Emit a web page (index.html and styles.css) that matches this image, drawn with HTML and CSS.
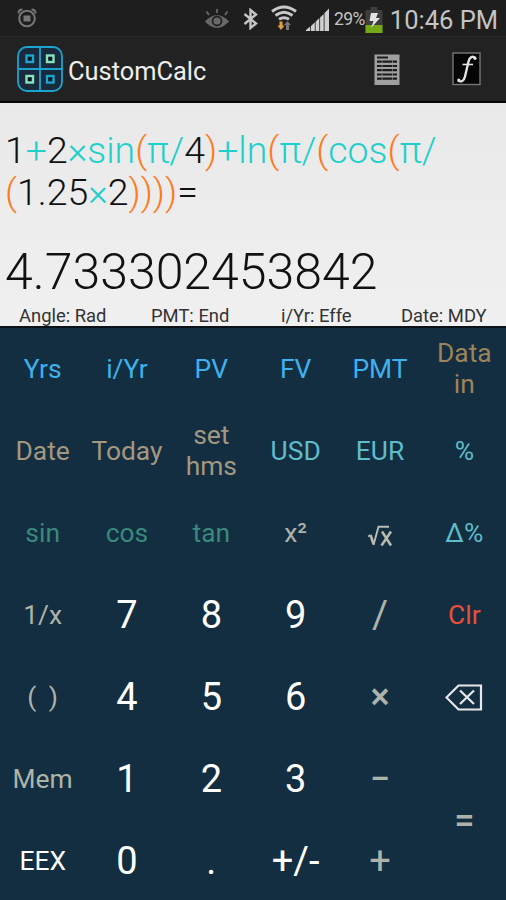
FILE: index.html
```html
<!DOCTYPE html>
<html lang="en">
<head>
    <meta charset="UTF-8">
    <meta name="viewport" content="width=device-width, initial-scale=1.0">
    <title>CustomCalc</title>
    <link rel="stylesheet" href="styles.css">
</head>
<body>
    <div class="statusbar">
        <svg class="alarm" width="20" height="20" viewBox="0 0 20 20" fill="none" stroke="#777" stroke-width="2">
            <circle cx="10" cy="10.5" r="7.8"/>
            <rect x="6.5" y="7.5" width="7" height="6" fill="#777" stroke="none"/>
            <path d="M1.5 5.5Q1.5 1.5 5.5 1.5M14.5 1.5Q18.5 1.5 18.5 5.5"/>
        </svg>
        <svg class="eye" width="26" height="22" viewBox="0 0 26 22">
            <path d="M1 13.5Q13 .5 25 13.5Q13 26.5 1 13.5Z" fill="#696969"/>
            <circle cx="13" cy="13" r="4.5" fill="none" stroke="#222" stroke-width="1.8"/>
            <path d="M2.5 3.5L5 7M13 1V5M23.5 3.5L21 7" stroke="#696969" stroke-width="1.8"/>
        </svg>
        <svg class="bluetooth" width="15" height="22" viewBox="0 0 15 22" fill="none" stroke="#c4c4c4" stroke-width="2.4">
            <path d="M1.5 6L13 15.5L7.5 20V2L13 6.5L1.5 16"/>
        </svg>
        <svg class="wifi" width="26" height="26" viewBox="0 0 26 26">
            <g fill="none" stroke="#c8c8c8" stroke-width="3">
                <path d="M1 6.5Q13 -2.5 25 6.5"/>
                <path d="M4.5 10.5Q13 4 21.5 10.5"/>
                <path d="M8 14.3Q13 11 18 14.3"/>
            </g>
            <path d="M8.5 16.5H11.5V20.5H13.5L10 25L6.5 20.5H8.5Z" fill="#e0a040"/>
            <path d="M15 25V20H13L16.5 16L20 20H18V25Z" fill="#777"/>
        </svg>
        <svg class="signal" width="24" height="24" viewBox="0 0 24 24" fill="#cfcfcf">
            <path d="M0 23V22L4.2 18.5V23ZM5 23V18L8.8 14.2V23ZM9.6 23V13.8L13.3 10V23ZM14.1 23V9.5L17.7 6V23ZM18.5 23V5L23 .5V23Z"/>
        </svg>
        <span class="percent">29%</span>
        <svg class="battery" width="18" height="26" viewBox="0 0 18 26">
            <path d="M5.5 0H12.5V3H17.5V26H.5V3H5.5Z" fill="#3d3d3d"/>
            <rect x=".5" y="18" width="17" height="8" fill="#75a817"/>
            <path d="M6 6H13L11 11H15L6 21L8.5 14H4.5Z" fill="#e2e2e2"/>
        </svg>
        <span class="clock">10:46 PM</span>
    </div>

    <header class="titlebar">
        <svg class="logo" width="46" height="46" viewBox="0 0 46 46" fill="none">
            <rect x="1" y="1" width="44" height="44" rx="9" fill="#182a3c" stroke="#1ba4cf" stroke-width="1.8"/>
            <path d="M23 1V45M1 23H45" stroke="#1ba4cf" stroke-width="1.8"/>
            <g stroke-width="2.4" fill="#0b1420">
                <rect x="9.5" y="9.5" width="6.5" height="6.5" stroke="#1ba4cf"/>
                <rect x="30" y="9.5" width="6.5" height="6.5" stroke="#8be0bd"/>
                <rect x="9.5" y="30" width="6.5" height="6.5" stroke="#8be0bd"/>
                <rect x="30" y="30" width="6.5" height="6.5" stroke="#1ba4cf"/>
            </g>
        </svg>
        <h1 class="title">CustomCalc</h1>
        <svg class="tape" width="26" height="31" viewBox="0 0 26 31">
            <rect x=".5" y=".5" width="25" height="30.5" fill="#a0a0a0"/>
            <path d="M3 3.5H14M3 7.7H23M3 12H23M3 16.2H23M3 20.5H23M3 24.7H23" stroke="#1c1c1c" stroke-width="2.2"/>
            <path d="M8 6V26M18.5 6V26" stroke="#a0a0a0" stroke-width=".6"/>
        </svg>
        <svg class="func" width="29" height="34" viewBox="0 0 29 34" fill="none">
            <rect x="1" y="1" width="27" height="31.5" fill="#050505" stroke="#777" stroke-width="1.4"/>
            <path d="M23.5 6C20.5 3.5 17.5 5 16.5 9.5L13 24.5C12 29 9 30.5 6 28.5" stroke="#e4e4e4" stroke-width="2.4"/>
            <path d="M10.5 12.5H21" stroke="#e4e4e4" stroke-width="1.6"/>
            <circle cx="23" cy="6.3" r="1.6" fill="#e4e4e4"/>
            <circle cx="6.8" cy="28" r="1.6" fill="#e4e4e4"/>
        </svg>
    </header>

    <div class="display">
        <div class="expression">
            1<i>+</i>2<i>×sin</i><b>(</b><i>π/</i>4<b>)</b><i>+ln</i><b>(</b><i>π/</i><b>(</b><i>cos</i><b>(</b><i>π/</i><br>
            <b>(</b>1.25<i>×</i>2<b>))))</b>=
        </div>
        <div class="result">4.733302453842</div>
        <div class="modes">
            <span>Angle: Rad</span>
            <span>PMT: End</span>
            <span>i/Yr: Effe</span>
            <span>Date: MDY</span>
        </div>
    </div>

    <div class="keypad">
        <div class="key finance">Yrs</div>
        <div class="key finance">i/Yr</div>
        <div class="key finance">PV</div>
        <div class="key finance">FV</div>
        <div class="key finance">PMT</div>
        <div class="key data">Data<br>in</div>

        <div class="key date">Date</div>
        <div class="key date">Today</div>
        <div class="key date">set<br>hms</div>
        <div class="key currency">USD</div>
        <div class="key currency">EUR</div>
        <div class="key currency">%</div>

        <div class="key trig">sin</div>
        <div class="key trig">cos</div>
        <div class="key trig">tan</div>
        <div class="key op">x²</div>
        <div class="key op root">
            <svg width="26" height="22" viewBox="0 0 26 22" fill="none" stroke="#b9bcb0">
                <path d="M1 11.5L3.5 10" stroke-width="1.5"/>
                <path d="M3.5 10L6.5 19" stroke-width="2.6"/>
                <path d="M6.5 20L11.5 1.8H22" stroke-width="1.9"/>
                <path d="M15 6.5L24 20.5M24 6.5L14.5 20.5" stroke-width="2.5"/>
            </svg>
        </div>
        <div class="key currency">Δ%</div>

        <div class="key op">1/x</div>
        <div class="key digit">7</div>
        <div class="key digit">8</div>
        <div class="key digit">9</div>
        <div class="key op big">/</div>
        <div class="key clear">Clr</div>

        <div class="key op parens">( )</div>
        <div class="key digit">4</div>
        <div class="key digit">5</div>
        <div class="key digit">6</div>
        <div class="key op times">×</div>
        <div class="key">
            <svg class="backspace" width="38" height="27" viewBox="0 0 38 27" fill="none" stroke="#e8e8ec" stroke-width="2.2">
                <path d="M1.5 13.5L13.5 1.5H36V25.5H13.5Z"/>
                <path d="M15 6.5L29 20M29 6.5L15 20"/>
            </svg>
        </div>

        <div class="key op">Mem</div>
        <div class="key digit">1</div>
        <div class="key digit">2</div>
        <div class="key digit">3</div>
        <div class="key op times">−</div>
        <div class="key op times equals">=</div>

        <div class="key white">EEX</div>
        <div class="key digit">0</div>
        <div class="key digit">.</div>
        <div class="key digit">+/-</div>
        <div class="key op plus">+</div>
    </div>
</body>
</html>
```
FILE: styles.css
```css
body {
    margin: 0;
    height: 900px;
    overflow: hidden;
    background: #132e40;
    font-family: Roboto, "Liberation Sans", sans-serif;
}
svg {
    display: block;
    flex-shrink: 0;
}
.statusbar {
    display: flex;
    align-items: center;
    box-sizing: border-box;
    height: 37px;
    padding: 2px 8px 0 17px;
    background: #1e1e1e;
    border-bottom: 1px solid #292929;
    color: #c4c4c4;
    white-space: nowrap;
}
.alarm {
    margin-bottom: 3px;
}
.eye {
    margin-left: 167px;
}
.bluetooth {
    margin-left: 13px;
}
.wifi {
    margin-left: 13px;
    margin-bottom: 2px;
}
.signal {
    margin-left: 9px;
    margin-top: 1px;
}
.percent {
    margin-left: 4px;
    width: 34px;
    font-size: 17.5px;
    letter-spacing: -0.6px;
}
.battery {
    margin-top: 1px;
}
.clock {
    margin-left: 7px;
    padding-top: 1px;
    font-size: 25.5px;
}
.titlebar {
    display: flex;
    align-items: center;
    box-sizing: border-box;
    height: 66px;
    padding: 0 25px 0 17px;
    background: #222;
    border-bottom: 2px solid #080808;
}
.title {
    flex: 1;
    margin: 0;
    padding: 4px 0 0 5px;
    color: #eee;
    font-size: 25.4px;
    font-weight: 400;
}
.func {
    margin-left: 52px;
}
.display {
    display: flex;
    flex-direction: column;
    box-sizing: border-box;
    height: 225px;
    padding: 26px 0 0 5px;
    background: linear-gradient(#e9e9e9, #f0f0f0);
    border-bottom: 2px solid #0b1319;
    color: #111;
    font-weight: 300;
}
.expression {
    height: 84px;
    font-size: 37.4px;
    line-height: 42px;
    white-space: nowrap;
}
.expression i {
    color: #1fcfcc;
    font-style: normal;
}
.expression b {
    color: #ff7a1a;
    font-weight: 300;
}
.result {
    margin-top: 29px;
    font-size: 50px;
    line-height: 60px;
}
.modes {
    display: grid;
    grid-template-columns: 132px 130px 120px auto;
    padding: 4px 0 0 14px;
    font-size: 18.4px;
    line-height: 20px;
    font-weight: 400;
    color: #333;
}
.keypad {
    display: grid;
    grid-template-columns: repeat(6, 1fr);
    grid-auto-rows: 82px;
    height: 572px;
}
.key {
    display: flex;
    align-items: center;
    justify-content: center;
    padding-left: 1px;
    font-size: 26.4px;
    line-height: 31px;
    text-align: center;
}
.finance {
    color: #3fb1ee;
}
.data {
    color: #9c8359;
}
.date {
    color: #a39780;
}
.currency {
    color: #5fbccb;
}
.trig {
    color: #388a7c;
}
.op {
    color: #aeb3aa;
}
.root {
    padding-top: 6px;
}
.parens {
    word-spacing: 6px;
}
.big {
    font-size: 39px;
}
.times {
    font-size: 36px;
    font-weight: 500;
}
.plus {
    font-size: 38px;
}
.equals {
    grid-row: span 2;
}
.digit {
    color: #fff;
    font-size: 38px;
}
.white {
    color: #fff;
}
.clear {
    color: #e8503a;
}
```
